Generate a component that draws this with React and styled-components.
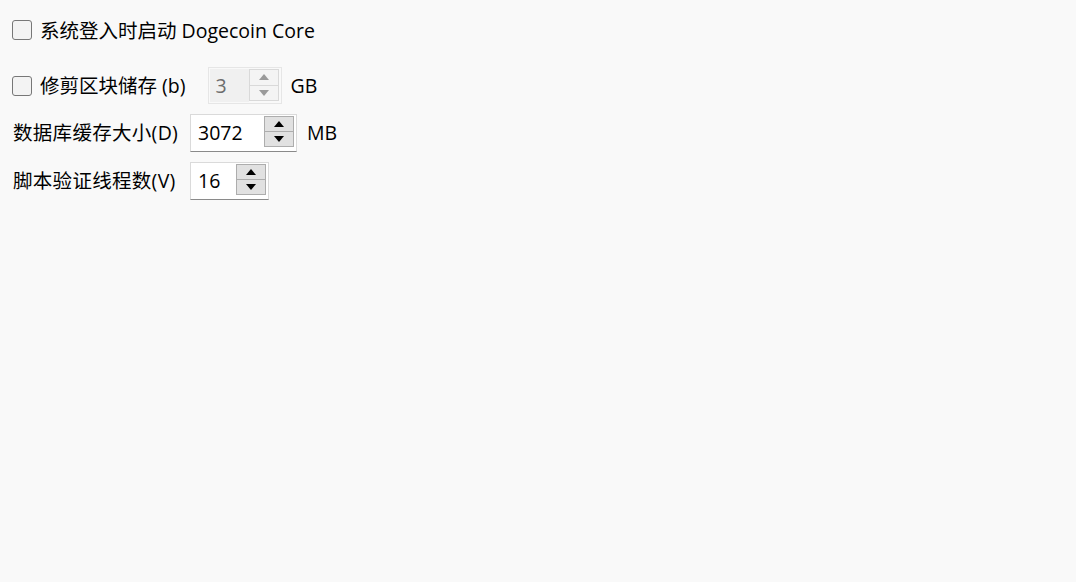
import React from "react";
import styled, { createGlobalStyle } from "styled-components";

const GlobalStyle = createGlobalStyle`
  html, body {
    margin: 0;
    padding: 0;
    background: #f9f9f9;
  }
  body {
    font-family: "Open Sans", "Noto Sans CJK SC", sans-serif;
    font-size: 19.5px;
    color: #000;
  }
`;

const Page = styled.div`
  width: 1076px;
  height: 582px;
  box-sizing: border-box;
  padding: 20px 12px;
  display: flex;
  flex-direction: column;
  align-items: flex-start;
`;

const Row = styled.div`
  display: flex;
  align-items: center;
  margin-top: ${(p) => p.$top || 0}px;
  height: ${(p) => p.$h || 20}px;
`;

const Check = styled.span`
  width: 18px;
  height: 18px;
  border: 1px solid #777;
  border-radius: 3px;
  background: #f3f3f3;
  flex-shrink: 0;
`;

const Label = styled.span`
  margin-left: ${(p) => p.$ml ?? 8}px;
  margin-right: ${(p) => p.$mr ?? 0}px;
  white-space: nowrap;
  line-height: 1;
  padding-top: 1px;
`;

const FieldLabel = styled.span`
  width: 177px;
  padding-left: 1px;
  white-space: nowrap;
  line-height: 1;
  letter-spacing: 0.3px;
`;

const Spin = styled.div`
  display: flex;
  align-items: stretch;
  width: ${(p) => p.$w}px;
  height: ${(p) => p.$h}px;
  box-sizing: border-box;
  border: 1px solid ${(p) => (p.$disabled ? "#e6e6e6" : "#dadada")};
  border-bottom-color: ${(p) => (p.$disabled ? "#e6e6e6" : "#8a8a8a")};
  background: ${(p) => (p.$disabled ? "#f9f9f9" : "#fff")};
  padding: 1px;
`;

const SpinValue = styled.div`
  flex: 1;
  display: flex;
  align-items: center;
  padding-left: 6px;
  color: ${(p) => (p.$disabled ? "#6d6d6d" : "#000")};
  background: ${(p) => (p.$disabled ? "#f0f0f0" : "transparent")};
  line-height: 1;
`;

const Buttons = styled.div`
  width: 30px;
  display: flex;
  flex-direction: column;
  margin: 0 1px ${(p) => (p.$disabled ? 1 : 3)}px 0;
`;

const SpinButton = styled.div`
  flex: 1;
  display: flex;
  align-items: center;
  justify-content: center;
  box-sizing: border-box;
  background: ${(p) => (p.$disabled ? "#f4f4f4" : "#e1e1e1")};
  border: 1px solid ${(p) => (p.$disabled ? "#d9d9d9" : "#adadad")};
  & + & {
    border-top: none;
  }
`;

const Arrow = ({ up, color }) => (
  <svg width="10" height="6" viewBox="0 0 10 6">
    <path d={up ? "M0 6 L5 0 L10 6 Z" : "M0 0 L5 6 L10 0 Z"} fill={color} />
  </svg>
);

const Unit = styled.span`
  margin-left: ${(p) => p.$ml}px;
  line-height: 1;
`;

const SpinBox = ({ value, width, height, disabled }) => {
  const c = disabled ? "#9a9a9a" : "#000";
  return (
    <Spin $w={width} $h={height} $disabled={disabled}>
      <SpinValue $disabled={disabled}>{value}</SpinValue>
      <Buttons $disabled={disabled}>
        <SpinButton $disabled={disabled}>
          <Arrow up color={c} />
        </SpinButton>
        <SpinButton $disabled={disabled}>
          <Arrow color={c} />
        </SpinButton>
      </Buttons>
    </Spin>
  );
};

export default function App() {
  return (
    <>
      <GlobalStyle />
      <Page>
        <Row>
          <Check />
          <Label>系统登入时启动 Dogecoin Core</Label>
        </Row>
        <Row $top={27} $h={37}>
          <Check />
          <Label $mr={22}>修剪区块储存 (b)</Label>
          <SpinBox value="3" width={74} height={37} disabled />
          <Unit $ml={9}>GB</Unit>
        </Row>
        <Row $top={10} $h={38}>
          <FieldLabel>数据库缓存大小(D)</FieldLabel>
          <SpinBox value="3072" width={107} height={38} />
          <Unit $ml={10}>MB</Unit>
        </Row>
        <Row $top={10} $h={38}>
          <FieldLabel>脚本验证线程数(V)</FieldLabel>
          <SpinBox value="16" width={79} height={38} />
        </Row>
      </Page>
    </>
  );
}
